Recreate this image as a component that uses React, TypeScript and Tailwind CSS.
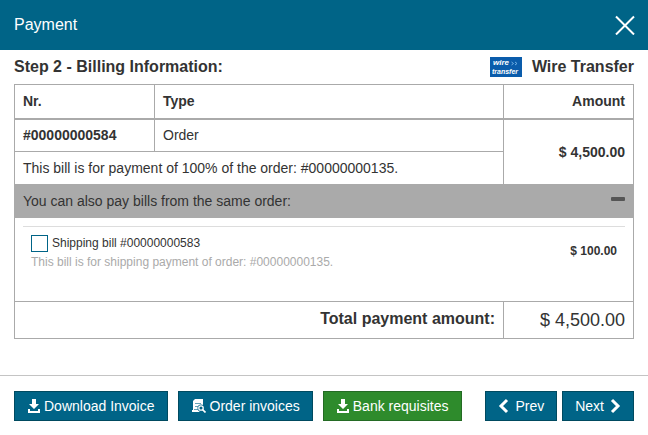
import { useState } from "react";
import type { ReactNode } from "react";

function CloseIcon() {
  return (
    <svg width="20" height="20" viewBox="0 0 20 20" fill="none" stroke="currentColor" strokeWidth="2" aria-hidden="true">
      <path d="M1 1.500l18 18M19 1.500l-18 18" />
    </svg>
  );
}

function DownloadIcon() {
  return (
    <svg width="13" height="14" viewBox="0 0 13 14" fill="currentColor" aria-hidden="true">
      <path d="M5 0h4v5h3L7 10 2 5h3z" />
      <path d="M1 10h2v2h8v-2h2v4H1z" />
    </svg>
  );
}

function InvoiceIcon() {
  return (
    <svg width="15" height="14" viewBox="0 0 15 14" aria-hidden="true">
      <path d="M4 0h8v8l-4 5H1v-2h1V2z" fill="currentColor" />
      <path d="M4 4.500h6M4 7.500h3M3 10.500h4" stroke="#006487" strokeWidth="0.6" />
      <circle cx="10" cy="9" r="3.500" fill="#006487" />
      <circle cx="10" cy="9" r="2.200" fill="none" stroke="currentColor" strokeWidth="1.300" />
      <path d="M11.500 10.500l3 3" stroke="currentColor" strokeWidth="1.700" />
    </svg>
  );
}

function Chevron({ left = false }: { left?: boolean }) {
  return (
    <svg width="11" height="16" viewBox="0 0 11 16" fill="none" stroke="currentColor" strokeWidth="3" aria-hidden="true">
      <path d={left ? "M9 2L3 8l6 6" : "M2 2l6 6-6 6"} />
    </svg>
  );
}

function WireLogo() {
  return (
    <svg width="32" height="20" viewBox="0 0 32 20" role="img" aria-label="Wire transfer">
      <rect width="32" height="20" fill="#0a5cab" />
      <g fill="#ffffff" fontFamily="Liberation Sans, Arial, sans-serif" fontWeight="700" fontStyle="italic">
        <text x="3" y="8" fontSize="8">wire</text>
        <text x="2" y="17" fontSize="7">transfer</text>
      </g>
      <path d="M21.500 5l2 1.500-2 1.500M25 5l2 1.500-2 1.500" fill="none" stroke="#79b7e8" strokeWidth="0.900" />
    </svg>
  );
}

function ActionButton({ children, green = false, nav = false }: { children: ReactNode; green?: boolean; nav?: boolean }) {
  return (
    <button
      type="button"
      className={`flex h-[30px] items-center justify-center whitespace-nowrap border px-3 text-sm text-white ${
        green ? "border-[#246b24] bg-[#2e8b2c]" : "border-[#004a60] bg-[#006487]"
      } ${nav ? "gap-1.5" : "gap-1"}`}
    >
      {children}
    </button>
  );
}

export default function App() {
  const [open, setOpen] = useState(true);
  const [shipping, setShipping] = useState(false);

  return (
    <div className="bg-white font-['Liberation_Sans',Arial,sans-serif] text-sm text-[#333]">
      <header className="flex h-[50px] items-center justify-between bg-[#006487] pr-[13px] pl-3.5 text-white">
        <h1 className="text-base">Payment</h1>
        <button type="button" aria-label="Close">
          <CloseIcon />
        </button>
      </header>

      <main className="px-3.5">
        <div className="flex h-[34px] items-center justify-between text-base font-bold">
          <h2>Step 2 - Billing Information:</h2>
          <div className="flex items-center gap-2.5">
            <WireLogo />
            <span>Wire Transfer</span>
          </div>
        </div>

        <table className="w-full table-fixed border-collapse border border-[#aaa]">
          <colgroup>
            <col className="w-[140px]" />
            <col />
            <col className="w-[130px]" />
          </colgroup>
          <thead>
            <tr className="h-[34px] border-b-2 border-[#aaa] text-left">
              <th className="border-r border-[#aaa] px-2">Nr.</th>
              <th className="border-r border-[#aaa] px-2">Type</th>
              <th className="px-2 text-right">Amount</th>
            </tr>
          </thead>
          <tbody>
            <tr className="h-[33px]">
              <th className="border-r border-b border-[#aaa] px-2 text-left">#00000000584</th>
              <td className="border-r border-b border-[#aaa] px-2">Order</td>
              <td rowSpan={2} className="px-2 text-right font-bold">$ 4,500.00</td>
            </tr>
            <tr className="h-8">
              <td colSpan={2} className="border-r border-[#aaa] px-2">
                This bill is for payment of 100% of the order: #00000000135.
              </td>
            </tr>
            <tr className="h-[34px] bg-[#aaa]">
              <td colSpan={3} className="px-2">
                <div className="flex items-center justify-between">
                  <span>You can also pay bills from the same order:</span>
                  <button
                    type="button"
                    aria-label="Toggle bills"
                    aria-expanded={open}
                    onClick={() => setOpen(!open)}
                    className="flex h-5 items-center pb-1"
                  >
                    <span className="h-1 w-3.5 rounded-[1px] bg-[#555]" />
                  </button>
                </div>
              </td>
            </tr>
            {open && (
              <tr className="h-[84px] align-top">
                <td colSpan={3} className="px-2 pt-2">
                  <div className="flex items-start justify-between border-t border-[#ddd] px-2 pt-2 text-xs">
                    <div>
                      <label className="flex items-center gap-1">
                        <input
                          type="checkbox"
                          checked={shipping}
                          onChange={() => setShipping(!shipping)}
                          className="size-[17px] appearance-none border border-[#006487] bg-white checked:bg-[#006487]"
                        />
                        Shipping bill #00000000583
                      </label>
                      <p className="pt-0.5 text-[#aaa]">This bill is for shipping payment of order: #00000000135.</p>
                    </div>
                    <span className="pt-2 font-bold">$ 100.00</span>
                  </div>
                </td>
              </tr>
            )}
          </tbody>
          <tfoot>
            <tr className="h-[37px] border-t border-[#aaa]">
              <th colSpan={2} className="border-r border-[#aaa] px-2 pb-0.5 text-right text-base">Total payment amount:</th>
              <td className="px-2 text-right text-lg">$ 4,500.00</td>
            </tr>
          </tfoot>
        </table>
      </main>

      <footer className="mt-9 flex justify-between border-t border-[#c4c4c4] px-3.5 pt-[15px] pb-3.5">
        <div className="flex gap-2.5">
          <ActionButton>
            <DownloadIcon />
            Download Invoice
          </ActionButton>
          <ActionButton>
            <InvoiceIcon />
            Order invoices
          </ActionButton>
          <ActionButton green>
            <DownloadIcon />
            Bank requisites
          </ActionButton>
        </div>
        <div className="flex gap-[5px]">
          <ActionButton nav>
            <Chevron left />
            Prev
          </ActionButton>
          <ActionButton nav>
            Next
            <Chevron />
          </ActionButton>
        </div>
      </footer>
    </div>
  );
}
